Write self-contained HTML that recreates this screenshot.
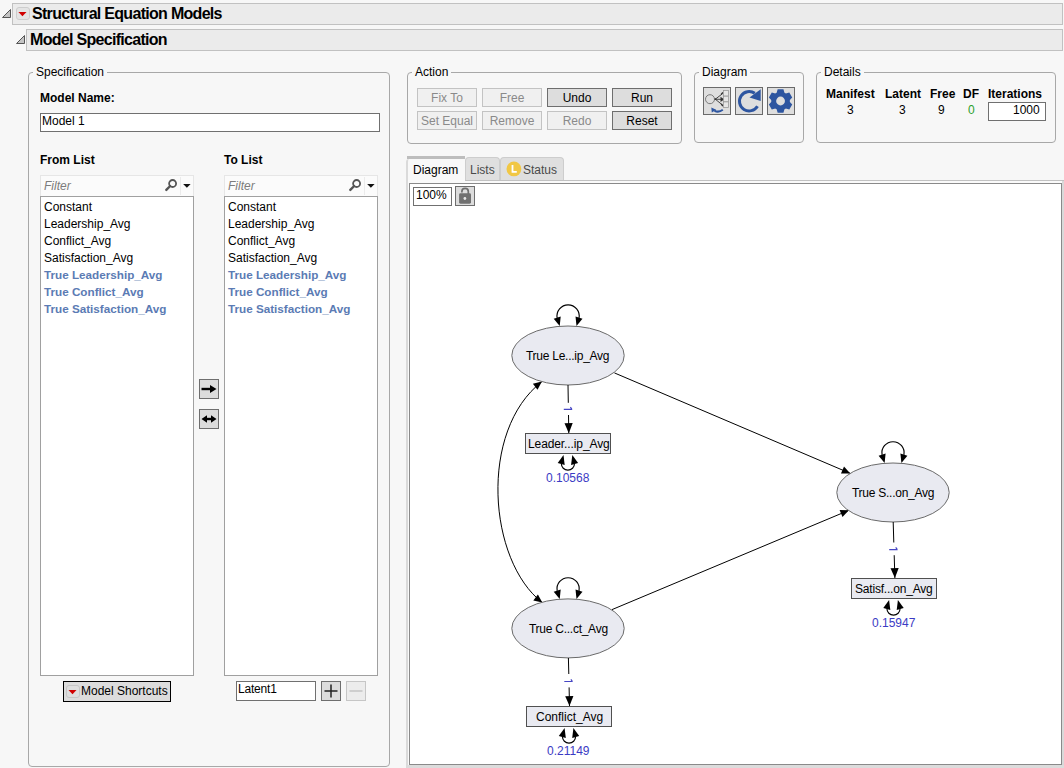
<!DOCTYPE html>
<html><head><meta charset="utf-8">
<style>
html,body{margin:0;padding:0;}
body{width:1064px;height:768px;overflow:hidden;position:relative;background:#f7f7f7;font-family:"Liberation Sans",sans-serif;font-size:12px;color:#000;}
.a{position:absolute;white-space:nowrap;}
.hdr{position:absolute;background:#ebebeb;border:1px solid #c1c1c1;box-sizing:border-box;}
.ht{position:absolute;font-weight:bold;font-size:16px;line-height:15px;letter-spacing:-0.7px;}
.grp{position:absolute;border:1px solid #a8a8a8;border-radius:4px;box-sizing:border-box;}
.gl{position:absolute;background:#f7f7f7;padding:0 3px;font-size:12px;line-height:12px;}
.btn{position:absolute;box-sizing:border-box;width:60px;height:19px;border:1px solid #c3c3c3;background:#f0f0f0;color:#8a8a8a;text-align:center;font-size:12px;line-height:19px;}
.btn.on{border-color:#6e6e6e;background:#dddddd;color:#000;}
.lb{position:absolute;font-weight:bold;font-size:12px;line-height:12px;}
.list{position:absolute;background:#fff;border:1px solid #a0a0a0;box-sizing:border-box;}
.li{position:absolute;left:3px;font-size:12px;line-height:17px;}
.li.b{color:#5b7bb4;font-weight:bold;font-size:11.7px;}
.nt{position:absolute;font-size:12px;line-height:12px;white-space:nowrap;}
.el{letter-spacing:-0.26px;}
.bl{color:#3b3bc4;}
.dh{position:absolute;font-weight:bold;font-size:12px;line-height:12px;}
.dv{position:absolute;font-size:12px;line-height:12px;}
.ib{position:absolute;box-sizing:border-box;width:28px;height:28px;border:1px solid #6a6a6a;background:#dedede;}
</style></head><body>

<!-- header 1 -->
<div class="hdr" style="left:12px;top:3px;width:1051px;height:22px;"></div>
<svg class="a" style="left:2px;top:9px" width="10" height="10"><path d="M0.5 8.5 L8.5 0.5 L8.5 8.5 Z" fill="#c4c4c4" stroke="#555" stroke-width="1"/></svg>
<div class="a" style="left:16px;top:7px;width:14px;height:13px;border:1px solid #cdcdcd;border-radius:3px;background:#e4e4e4;box-sizing:border-box;"></div>
<svg class="a" style="left:18px;top:12px" width="9" height="6"><path d="M0.4 0 L8.5 0 L4.45 4.3 Z" fill="#d00000"/></svg>
<div class="ht" style="left:32px;top:6px;">Structural Equation Models</div>

<!-- header 2 -->
<div class="hdr" style="left:26px;top:29px;width:1037px;height:22px;"></div>
<svg class="a" style="left:16px;top:35px" width="10" height="10"><path d="M0.5 8.5 L8.5 0.5 L8.5 8.5 Z" fill="#c4c4c4" stroke="#555" stroke-width="1"/></svg>
<div class="ht" style="left:30px;top:32px;">Model Specification</div>

<!-- Specification group -->
<div class="grp" style="left:28px;top:72px;width:362px;height:695px;"></div>
<div class="gl" style="left:33px;top:66px;">Specification</div>
<div class="lb" style="left:40px;top:92px;">Model Name:</div>
<div class="a" style="left:40px;top:113px;width:340px;height:19px;border:1px solid #707070;background:#fff;box-sizing:border-box;font-size:12px;line-height:15px;padding-left:1px;">Model 1</div>

<div class="lb" style="left:40px;top:154px;">From List</div>
<div class="lb" style="left:224px;top:154px;">To List</div>

<!-- filters -->
<div class="a" style="left:40px;top:175px;width:154px;height:22px;background:#fbfbfb;border:1px solid #e6e6e6;border-bottom:1px solid #8c8c8c;box-sizing:border-box;"></div>
<div class="a" style="left:44px;top:179px;font-style:italic;color:#7c7c7c;font-size:12px;line-height:15px;">Filter</div>
<div class="a" style="left:224px;top:175px;width:154px;height:22px;background:#fbfbfb;border:1px solid #e6e6e6;border-bottom:1px solid #8c8c8c;box-sizing:border-box;"></div>
<div class="a" style="left:228px;top:179px;font-style:italic;color:#7c7c7c;font-size:12px;line-height:15px;">Filter</div>
<svg class="a" style="left:162px;top:177px" width="32" height="18"><circle cx="10.6" cy="6.5" r="3.5" fill="none" stroke="#555" stroke-width="1.8"/><path d="M8.2 9 L4.3 12.9" stroke="#555" stroke-width="2.4" stroke-linecap="round"/><path d="M18.5 0 L18.5 18" stroke="#ebebeb"/><path d="M21.1 7 L28.6 7 L24.85 10.7 Z" fill="#111"/></svg>
<svg class="a" style="left:346px;top:177px" width="32" height="18"><circle cx="10.6" cy="6.5" r="3.5" fill="none" stroke="#555" stroke-width="1.8"/><path d="M8.2 9 L4.3 12.9" stroke="#555" stroke-width="2.4" stroke-linecap="round"/><path d="M18.5 0 L18.5 18" stroke="#ebebeb"/><path d="M21.1 7 L28.6 7 L24.85 10.7 Z" fill="#111"/></svg>

<!-- lists -->
<div class="list" style="left:40px;top:196px;width:154px;height:480px;">
 <div class="li" style="top:2px">Constant</div>
 <div class="li" style="top:19px">Leadership_Avg</div>
 <div class="li" style="top:36px">Conflict_Avg</div>
 <div class="li" style="top:53px">Satisfaction_Avg</div>
 <div class="li b" style="top:69px">True Leadership_Avg</div>
 <div class="li b" style="top:86px">True Conflict_Avg</div>
 <div class="li b" style="top:103px">True Satisfaction_Avg</div>
</div>
<div class="list" style="left:224px;top:196px;width:154px;height:480px;">
 <div class="li" style="top:2px">Constant</div>
 <div class="li" style="top:19px">Leadership_Avg</div>
 <div class="li" style="top:36px">Conflict_Avg</div>
 <div class="li" style="top:53px">Satisfaction_Avg</div>
 <div class="li b" style="top:69px">True Leadership_Avg</div>
 <div class="li b" style="top:86px">True Conflict_Avg</div>
 <div class="li b" style="top:103px">True Satisfaction_Avg</div>
</div>

<!-- arrow buttons -->
<div class="a" style="left:199px;top:379px;width:20px;height:20px;border:1px solid #6e6e6e;background:#dcdcdc;box-sizing:border-box;"></div>
<svg class="a" style="left:199px;top:379px" width="20" height="20"><path d="M2.5 10 L12 10" stroke="#000" stroke-width="2.4"/><path d="M17.5 10 L11 6 L11 14 Z" fill="#000"/></svg>
<div class="a" style="left:199px;top:409px;width:20px;height:20px;border:1px solid #6e6e6e;background:#dcdcdc;box-sizing:border-box;"></div>
<svg class="a" style="left:199px;top:409px" width="20" height="20"><path d="M6 10 L14 10" stroke="#000" stroke-width="2.4"/><path d="M2.5 10 L8 6.3 L8 13.7 Z M17.5 10 L12 6.3 L12 13.7 Z" fill="#000"/></svg>

<!-- bottom controls -->
<div class="a" style="left:63px;top:681px;width:108px;height:21px;border:1px solid #000;background:#dcdcdc;box-sizing:border-box;"></div>
<div class="a" style="left:66px;top:685px;width:14px;height:13px;border:1px solid #c6c6c6;border-radius:3px;background:#dedede;box-sizing:border-box;"></div>
<svg class="a" style="left:68px;top:690px" width="9" height="6"><path d="M0.5 0 L8.5 0 L4.5 4.3 Z" fill="#d00000"/></svg>
<div class="a" style="left:81px;top:685px;font-size:12px;line-height:13px;">Model Shortcuts</div>
<div class="a" style="left:236px;top:681px;width:80px;height:20px;border:1px solid #707070;background:#fff;box-sizing:border-box;font-size:12px;line-height:13px;padding-left:1px;padding-top:1px;letter-spacing:-0.2px;">Latent1</div>
<div class="a" style="left:321px;top:681px;width:20px;height:20px;border:1px solid #6e6e6e;background:#dcdcdc;box-sizing:border-box;"></div>
<svg class="a" style="left:321px;top:681px" width="20" height="20"><path d="M10 3.5 L10 16.5 M3.5 10 L16.5 10" stroke="#222" stroke-width="1.5"/></svg>
<div class="a" style="left:346px;top:681px;width:20px;height:20px;border:1px solid #c6c6c6;background:#ececec;box-sizing:border-box;"></div>
<svg class="a" style="left:346px;top:681px" width="20" height="20"><path d="M3.5 10 L16.5 10" stroke="#c4c4c4" stroke-width="1.5"/></svg>

<!-- Action group -->
<div class="grp" style="left:407px;top:72px;width:275px;height:72px;"></div>
<div class="gl" style="left:412px;top:66px;">Action</div>
<div class="btn" style="left:417px;top:88px;">Fix To</div>
<div class="btn" style="left:482px;top:88px;">Free</div>
<div class="btn on" style="left:547px;top:88px;">Undo</div>
<div class="btn on" style="left:612px;top:88px;">Run</div>
<div class="btn" style="left:417px;top:111px;">Set Equal</div>
<div class="btn" style="left:482px;top:111px;">Remove</div>
<div class="btn" style="left:547px;top:111px;">Redo</div>
<div class="btn on" style="left:612px;top:111px;">Reset</div>

<!-- Diagram group -->
<div class="grp" style="left:694px;top:72px;width:110px;height:71px;"></div>
<div class="gl" style="left:699px;top:66px;">Diagram</div>
<div class="ib" style="left:703px;top:87px;"></div>
<svg class="a" style="left:703px;top:87px" width="28" height="28">
 <circle cx="7" cy="12.2" r="4.5" fill="none" stroke="#7a7a7a" stroke-width="1"/>
 <path d="M12.3 12.2 L19.6 6.6 M12.3 12.2 L19.6 12.4 M12.3 12.2 L19.6 18.1" stroke="#333" stroke-width="0.9"/>
 <circle cx="12.4" cy="12.2" r="0.9" fill="#333"/>
 <path d="M19.9 5.4 L18.2 7.4 M19.9 12.4 L18.2 11.2 L18.2 13.6 Z M19.9 19.1 L18.2 17" stroke="#333" stroke-width="1.4"/>
 <rect x="20.5" y="3.5" width="5" height="5.6" fill="#e6e6e6" stroke="#9a9a9a" stroke-width="0.8"/>
 <rect x="20.5" y="9.2" width="5" height="5.6" fill="#e6e6e6" stroke="#9a9a9a" stroke-width="0.8"/>
 <rect x="20.5" y="14.9" width="5" height="5.6" fill="#e6e6e6" stroke="#9a9a9a" stroke-width="0.8"/>
 <path d="M11.5 23.6 Q15.5 26 19.8 22.7" fill="none" stroke="#2d55a0" stroke-width="2"/>
 <path d="M8.3 20.4 L8.8 25.6 L13.2 22.8 Z" fill="#2d55a0"/>
</svg>
<div class="ib" style="left:735px;top:87px;"></div>
<svg class="a" style="left:735px;top:87px" width="28" height="28">
 <path d="M22.5 19.2 A9.7 9.7 0 1 1 19.8 6.3" fill="none" stroke="#2d55a0" stroke-width="3"/>
 <path d="M25.7 2.2 L25.7 14 L14.5 10.6 Z" fill="#2d55a0"/>
</svg>
<div class="ib" style="left:767px;top:87px;"></div>
<svg class="a" style="left:767px;top:87px" width="28" height="28">
 <circle cx="13.55" cy="14" r="9" fill="#2d55a0"/>
 <path d="M9.65 5.70 L10.65 2.20 L16.45 2.20 L17.45 5.70 L18.79 6.47 L22.32 5.59 L25.22 10.61 L22.69 13.23 L22.69 14.77 L25.22 17.39 L22.32 22.41 L18.79 21.53 L17.45 22.30 L16.45 25.80 L10.65 25.80 L9.65 22.30 L8.31 21.53 L4.78 22.41 L1.88 17.39 L4.41 14.77 L4.41 13.23 L1.88 10.61 L4.78 5.59 L8.31 6.47 Z" fill="#2d55a0"/>
 <circle cx="13.55" cy="14" r="4.4" fill="#dedede"/>
</svg>

<!-- Details group -->
<div class="grp" style="left:816px;top:72px;width:240px;height:71px;"></div>
<div class="gl" style="left:821px;top:66px;">Details</div>
<div class="dh" style="left:826px;top:88px;">Manifest</div>
<div class="dh" style="left:885px;top:88px;">Latent</div>
<div class="dh" style="left:930px;top:88px;">Free</div>
<div class="dh" style="left:963px;top:88px;">DF</div>
<div class="dh" style="left:988px;top:88px;">Iterations</div>
<div class="dv" style="left:847px;top:104px;">3</div>
<div class="dv" style="left:899px;top:104px;">3</div>
<div class="dv" style="left:938px;top:104px;">9</div>
<div class="dv" style="left:968px;top:104px;color:#2ca02c;">0</div>
<div class="a" style="left:988px;top:102px;width:58px;height:19px;border:1px solid #707070;background:#fff;box-sizing:border-box;"></div>
<div class="dv" style="left:1013px;top:104px;">1000</div>

<!-- tabs -->
<div class="a" style="left:407px;top:156px;width:58px;height:3px;background:#bdbdbd;"></div>
<div class="a" style="left:406px;top:159px;width:59px;height:22px;background:#f8f8f8;border-left:2px solid #dadada;border-top-left-radius:3px;box-sizing:border-box;"></div>
<div class="a" style="left:413px;top:164px;font-size:12px;line-height:13px;">Diagram</div>
<div class="a" style="left:465px;top:157px;width:35px;height:24px;background:#dfdfdf;border:1px solid #cdcdcd;border-bottom:none;border-radius:4px 4px 0 0;box-sizing:border-box;"></div>
<div class="a" style="left:470px;top:164px;font-size:12px;line-height:13px;color:#4a4a4a;">Lists</div>
<div class="a" style="left:500px;top:157px;width:64px;height:24px;background:#dfdfdf;border:1px solid #cdcdcd;border-bottom:none;border-radius:4px 4px 0 0;box-sizing:border-box;"></div>
<svg class="a" style="left:506px;top:161px" width="16" height="16"><circle cx="7.9" cy="7.9" r="7.4" fill="#f1c744"/><path d="M6.5 4 L6.5 10.8 L10.8 10.8" fill="none" stroke="#fff" stroke-width="1.8"/></svg>
<div class="a" style="left:523px;top:164px;font-size:12px;line-height:13px;color:#4a4a4a;">Status</div>

<!-- diagram panel -->
<div class="a" style="left:406px;top:180px;width:658px;height:588px;border-left:2px solid #dadada;box-sizing:border-box;background:#fafafa;"></div>
<div class="a" style="left:465px;top:180px;width:599px;height:1px;background:#c2c2c2;"></div>
<div class="a" style="left:1062px;top:181px;width:2px;height:587px;background:#d9d9d9;"></div>
<div class="a" style="left:407px;top:765px;width:657px;height:3px;background:#dcdcdc;"></div>
<div class="a" style="left:409px;top:183px;width:653px;height:582px;border:1px solid #8a8a8a;background:#fff;box-sizing:border-box;"></div>
<div class="a" style="left:413px;top:187px;width:39px;height:19px;border:1px solid #707070;background:#fff;box-sizing:border-box;font-size:12px;line-height:15px;padding-left:2px;">100%</div>
<div class="a" style="left:455px;top:186px;width:20px;height:20px;border:1px solid #6e6e6e;background:#dcdcdc;box-sizing:border-box;"></div>
<svg class="a" style="left:455px;top:186px" width="20" height="20"><path d="M6.9 6.6 L6.9 5.6 A3.2 3.2 0 0 1 13.3 5.6 L13.3 8" fill="none" stroke="#707070" stroke-width="1.7"/><rect x="4.1" y="7.3" width="11.9" height="10.4" rx="1.4" fill="#707070"/><circle cx="9.9" cy="12.5" r="1.4" fill="#e6e6e6"/></svg>

<svg class="a" style="left:0;top:0" width="1064" height="768">
<path d="M541.9 381.6 C478.5 430.7 488.1 560.7 542.3 602.6" fill="none" stroke="#000" stroke-width="1"/>
<path d="M541.9 381.6 L537.5 389.8 L532.9 383.8 Z" fill="#000"/>
<path d="M542.3 602.6 L533.3 600.4 L537.9 594.4 Z" fill="#000"/>
<path d="M614.4 372.9 L850.3 473.4" stroke="#000" stroke-width="1"/>
<path d="M850.3 473.4 L841.0 473.6 L844.0 466.6 Z" fill="#000"/>
<path d="M611.8 609.7 L848.9 510.3" stroke="#000" stroke-width="1"/>
<path d="M848.9 510.3 L842.5 517.1 L839.6 510.1 Z" fill="#000"/>
<ellipse cx="568" cy="355.5" rx="56.2" ry="29.5" fill="#e9eaf1" stroke="#6a6a6a" stroke-width="1"/>
<ellipse cx="893" cy="492.5" rx="56.2" ry="29.5" fill="#e9eaf1" stroke="#6a6a6a" stroke-width="1"/>
<ellipse cx="568" cy="628.4" rx="56.2" ry="29.5" fill="#e9eaf1" stroke="#6a6a6a" stroke-width="1"/>
<path d="M568.0 385.0 L568.3 402.8 M568.5 415.0 L568.8 433.2" stroke="#000" stroke-width="1"/>
<path d="M568.8 433.2 L564.5 423.3 L572.7 423.1 Z" fill="#000"/>
<path d="M893.2 522.0 L893.8 542.5 M894.2 555.2 L894.9 578.1" stroke="#000" stroke-width="1"/>
<path d="M894.9 578.1 L890.5 568.2 L898.7 568.0 Z" fill="#000"/>
<path d="M568.4 658.0 L568.8 674.0 M569.1 687.4 L569.5 706.1" stroke="#000" stroke-width="1"/>
<path d="M569.5 706.1 L565.2 696.2 L573.4 696.0 Z" fill="#000"/>
<rect x="525.5" y="433.5" width="85" height="20" fill="#e9eaf1" stroke="#505050" stroke-width="1"/>
<rect x="851.5" y="578.5" width="85" height="20" fill="#e9eaf1" stroke="#505050" stroke-width="1"/>
<rect x="526.5" y="706.5" width="85" height="20" fill="#e9eaf1" stroke="#505050" stroke-width="1"/>
<path d="M557.2 318.0 A11.1 11.1 0 1 1 579.0 318.0" fill="none" stroke="#000" stroke-width="1.15"/>
<path d="M559.7 326.0 L553.7 318.8 L560.7 316.5 Z"/>
<path d="M576.5 326.0 L582.5 318.8 L575.5 316.5 Z"/>
<path d="M882.1 454.9 A11.1 11.1 0 1 1 903.9 454.9" fill="none" stroke="#000" stroke-width="1.15"/>
<path d="M884.6 462.9 L878.6 455.7 L885.6 453.4 Z"/>
<path d="M901.4 462.9 L907.4 455.7 L900.4 453.4 Z"/>
<path d="M557.2 590.9 A11.1 11.1 0 1 1 579.0 590.9" fill="none" stroke="#000" stroke-width="1.15"/>
<path d="M559.7 598.9 L553.7 591.7 L560.7 589.4 Z"/>
<path d="M576.5 598.9 L582.5 591.7 L575.5 589.4 Z"/>
<path d="M561.3 463.6 A6.6 6.6 0 0 0 574.5 463.6" fill="none" stroke="#000" stroke-width="1.15"/>
<path d="M563.5 454.9 L557.7 462.9 L564.7 465.0 Z"/>
<path d="M572.3 454.9 L578.1 462.9 L571.1 465.0 Z"/>
<path d="M886.9 608.6 A6.6 6.6 0 0 0 900.1 608.6" fill="none" stroke="#000" stroke-width="1.15"/>
<path d="M889.1 599.9 L883.3 607.9 L890.3 610.0 Z"/>
<path d="M897.9 599.9 L903.7 607.9 L896.7 610.0 Z"/>
<path d="M562.4 736.6 A6.6 6.6 0 0 0 575.6 736.6" fill="none" stroke="#000" stroke-width="1.15"/>
<path d="M564.6 727.9 L558.8 735.9 L565.8 738.0 Z"/>
<path d="M573.4 727.9 L579.2 735.9 L572.2 738.0 Z"/>
<path d="M563.8 409.4 L572.2 409.4 M571.8 409.2 L570.4 407.2" fill="none" stroke="#4646c4" stroke-width="1.15"/>
<path d="M889.2 549.6 L897.6 549.6 M897.2 549.4 L895.7 547.3" fill="none" stroke="#4646c4" stroke-width="1.15"/>
<path d="M564.3 681.5 L572.7 681.5 M572.3 681.3 L570.9 679.3" fill="none" stroke="#4646c4" stroke-width="1.15"/>
</svg>

<!-- node labels -->
<div class="nt el" style="left:526px;top:350px;">True Le...ip_Avg</div>
<div class="nt el" style="left:852px;top:487px;">True S...on_Avg</div>
<div class="nt el" style="left:529px;top:623px;">True C...ct_Avg</div>
<div class="nt" style="left:528px;top:438px;letter-spacing:-0.1px;">Leader...ip_Avg</div>
<div class="nt" style="left:855px;top:583px;letter-spacing:-0.2px;">Satisf...on_Avg</div>
<div class="nt" style="left:536px;top:711px;">Conflict_Avg</div>
<div class="nt bl" style="left:546px;top:472px;">0.10568</div>
<div class="nt bl" style="left:872px;top:617px;">0.15947</div>
<div class="nt bl" style="left:547px;top:745px;">0.21149</div>

</body></html>
